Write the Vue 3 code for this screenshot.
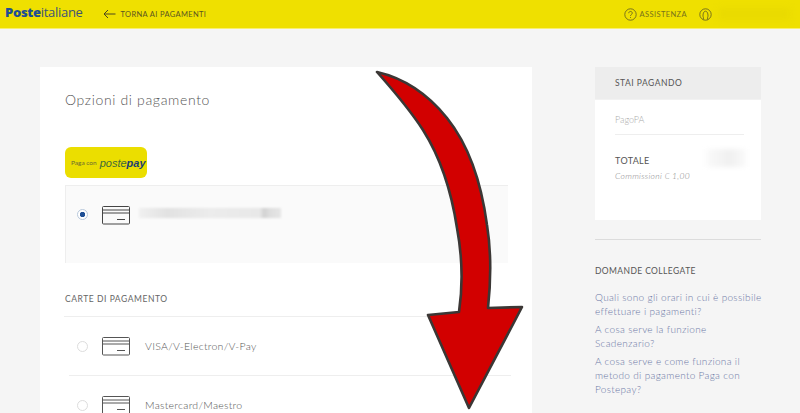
<template>
  <div class="page">
    <header class="topbar">
      <div class="logo"><b>Poste</b>italiane</div>
      <a class="back">
        <svg width="13" height="10" viewBox="0 0 13 10" fill="none" stroke="#4a4620" stroke-width="1">
          <path d="M12.5 5H1M5 1 1 5l4 4" />
        </svg>
        TORNA AI PAGAMENTI
      </a>
      <div class="top-right">
        <svg width="13" height="13" viewBox="0 0 13 13" fill="none" stroke="#6b6620" stroke-width="0.9">
          <circle cx="6.5" cy="6.5" r="5.7" />
          <path d="M4.7 5.2c0-2.3 3.6-2.3 3.6-.1 0 1.4-1.8 1.4-1.8 2.8M6.5 9v.9" />
        </svg>
        <span class="help">ASSISTENZA</span>
        <svg class="user" width="13" height="13" viewBox="0 0 13 13" fill="none" stroke="#6b6620" stroke-width="0.9">
          <circle cx="6.5" cy="6.5" r="5.7" />
          <path d="M4.4 11.5V9.3C3.6 8.5 3.9 3.2 6.5 3.2s2.9 5.3 2.1 6.1v2.2" />
        </svg>
        <span class="blur-name"></span>
      </div>
    </header>

    <main class="content">
      <section class="card">
        <h1>Opzioni di pagamento</h1>
        <button class="postepay">
          <span class="paga">Paga con</span>
          <span class="brand">poste<b>pay</b></span>
        </button>
        <div class="saved">
          <span class="radio checked"></span>
          <svg class="cc" width="28" height="19" viewBox="0 0 28 19" fill="none" stroke="#444" stroke-width="1">
            <rect x="0.5" y="0.5" width="27" height="17.5" rx="1" />
            <path d="M.5 4h27M.5 7h27M15 13.5h8" />
          </svg>
          <span class="blur-card"></span>
        </div>
        <h2>CARTE DI PAGAMENTO</h2>
        <div class="method first">
          <span class="radio"></span>
          <svg class="cc" width="28" height="19" viewBox="0 0 28 19" fill="none" stroke="#555" stroke-width="1">
            <rect x="0.5" y="0.5" width="27" height="17.5" rx="1" />
            <path d="M.5 4h27M.5 7h27M15 13.5h8" />
          </svg>
          <span>VISA/V-Electron/V-Pay</span>
        </div>
        <div class="method">
          <span class="radio"></span>
          <svg class="cc" width="28" height="19" viewBox="0 0 28 19" fill="none" stroke="#555" stroke-width="1">
            <rect x="0.5" y="0.5" width="27" height="17.5" rx="1" />
            <path d="M.5 4h27M.5 7h27M15 13.5h8" />
          </svg>
          <span>Mastercard/Maestro</span>
        </div>
      </section>

      <aside class="side">
        <div class="summary">
          <div class="summary-head">STAI PAGANDO</div>
          <div class="summary-body">
            <div class="payee">PagoPA</div>
            <div class="total">
              <div>
                <div class="total-label">TOTALE</div>
                <div class="fee">Commissioni € 1,00</div>
              </div>
              <span class="blur-total"></span>
            </div>
          </div>
        </div>
        <div class="faq">
          <h3>DOMANDE COLLEGATE</h3>
          <a v-for="q in questions" :key="q">{{ q }}</a>
        </div>
      </aside>
    </main>

    <svg class="arrow" width="800" height="413" viewBox="0 0 800 413">
      <path
        d="M377 72C403 78 427 93 447 118C467 143 481 180 487 225C491 250 491 280 488 308L522 307L469 408L428 315L459 312C463 285 462 255 457 228C452 195 442 160 423 130C410 110 393 90 377 72Z"
        fill="#d20000" stroke="#3b3735" stroke-width="2.6" stroke-linejoin="round"
      />
    </svg>
  </div>
</template>

<script setup>
const questions = [
  "Quali sono gli orari in cui è possibile effettuare i pagamenti?",
  "A cosa serve la funzione Scadenzario?",
  "A cosa serve e come funziona il metodo di pagamento Paga con Postepay?",
];
</script>

<style>
html,
body {
  margin: 0;
  background: #f5f5f5;
}
</style>

<style scoped>
.page {
  position: relative;
  width: 800px;
  height: 413px;
  overflow: hidden;
  background: #f5f5f5;
  font-family: Lato, "Liberation Sans", sans-serif;
  color: #555;
}
.topbar {
  display: flex;
  align-items: center;
  height: 29px;
  padding: 0 5px;
  box-sizing: border-box;
  background: #efe000;
  border-bottom: 1px solid #f8ef70;
}
.logo {
  font-family: "Open Sans", sans-serif;
  font-size: 13px;
  letter-spacing: -0.3px;
  color: #3b5378;
  margin-top: -4px;
}
.logo b {
  font-weight: 800;
  color: #1e4f94;
}
.back {
  display: flex;
  align-items: center;
  gap: 5px;
  margin-left: 20px;
  font-size: 7.5px;
  letter-spacing: 0.35px;
  color: #5a5520;
}
.top-right {
  display: flex;
  align-items: center;
  margin-left: auto;
  margin-right: 5px;
  color: #77721c;
  font-size: 7.5px;
  letter-spacing: 0.4px;
}
.help {
  margin-left: 3px;
}
.user {
  margin-left: 12px;
}
.blur-name {
  width: 72px;
  height: 12px;
  margin-left: 6px;
  background: #e9da00;
  filter: blur(3px);
}
.content {
  display: flex;
  align-items: flex-start;
  padding: 38px 0 0 40px;
}
.card {
  box-sizing: border-box;
  width: 492px;
  height: 360px;
  padding: 24px 24px 0 25px;
  background: #fff;
}
h1 {
  margin: 0;
  font-size: 14px;
  font-weight: 300;
  letter-spacing: 0.65px;
  line-height: 18px;
  color: #555;
}
.postepay {
  display: flex;
  align-items: center;
  gap: 3px;
  width: 82px;
  height: 31px;
  margin-top: 38px;
  padding: 0 0 0 6px;
  border: 0;
  border-radius: 6px;
  background: #ebde00;
  font-family: inherit;
}
.paga {
  font-size: 6.5px;
  color: #6a6a30;
  white-space: nowrap;
}
.brand {
  font-family: "Liberation Sans", sans-serif;
  font-style: italic;
  font-size: 11px;
  color: #3f6a3a;
}
.brand b {
  color: #1d3f73;
}
.saved {
  display: flex;
  align-items: flex-start;
  height: 78px;
  margin-top: 7px;
  padding-top: 20px;
  box-sizing: border-box;
  background: #fafafa;
  border-top: 1px solid #eeeeee;
  border-left: 1px solid #eeeeee;
}
.radio {
  box-sizing: border-box;
  flex: none;
  width: 11px;
  height: 11px;
  margin: 3px 14px 0 11px;
  border: 1px solid #ddd;
  border-radius: 50%;
  background: #fff;
}
.radio.checked {
  border-color: #b9c9dc;
  background: radial-gradient(circle, #1f4f95 0 2.4px, #fff 3px);
}
.cc {
  flex: none;
}
.blur-card {
  width: 142px;
  height: 10px;
  margin: 2px 0 0 9px;
  background: linear-gradient(90deg, #f0f0f0, #e2e2e2 20%, #ececec 50%, #e8e8e8 85%, #d2d2d2 88%, #dedede 92%, #e6e6e6);
  filter: blur(1px);
}
h2 {
  margin: 30px 0 0;
  font-size: 8.5px;
  font-weight: 400;
  letter-spacing: 0.55px;
  line-height: 12px;
  color: #666;
}
.method {
  display: flex;
  align-items: center;
  height: 58px;
  margin-left: 4px;
  margin-right: -3px;
  border-top: 1px solid #eeeeee;
  font-size: 10.5px;
  font-weight: 300;
  letter-spacing: 0.28px;
  color: #555;
}
.method.first {
  margin-top: 11px;
  margin-left: -1px;
  padding-left: 5px;
}
.method .radio {
  margin-top: 0;
  margin-left: 8px;
}
.method .cc + span {
  margin-left: 15px;
}
.side {
  width: 166px;
  margin-left: 63px;
}
.summary {
  background: #fff;
}
.summary-head {
  height: 32px;
  padding-left: 20px;
  line-height: 33px;
  background: #ededed;
  border-bottom: 1px solid #f2f2f2;
  font-size: 8.5px;
  letter-spacing: 0.5px;
  color: #555;
}
.summary-body {
  height: 120px;
  padding: 13px 19px 0 20px;
  box-sizing: border-box;
}
.payee {
  height: 21px;
  font-size: 9px;
  font-weight: 300;
  line-height: 14px;
  color: #aaa;
  border-bottom: 1px solid #eee;
  margin-right: -2px;
}
.total {
  display: flex;
  justify-content: space-between;
  margin-top: 20px;
}
.total-label {
  font-size: 9px;
  letter-spacing: 0.35px;
  line-height: 12px;
  color: #555;
}
.fee {
  margin-top: 4px;
  font-size: 8.5px;
  font-weight: 300;
  font-style: italic;
  letter-spacing: 0.3px;
  color: #888;
}
.blur-total {
  width: 40px;
  height: 18px;
  margin: -6px -4px 0 0;
  background: linear-gradient(90deg, #fafafa, #f0f0f0 60%, #fafafa);
  filter: blur(2px);
}
.faq {
  margin-top: 19px;
  padding-top: 25px;
  border-top: 1px solid #dcdcdc;
}
h3 {
  margin: 0 0 13px;
  font-size: 8.5px;
  font-weight: 400;
  letter-spacing: 0.4px;
  line-height: 12px;
  color: #555;
}
.faq a {
  display: block;
  margin-right: -4px;
  margin-bottom: 4px;
  font-size: 10px;
  font-weight: 300;
  letter-spacing: 0.32px;
  line-height: 14px;
  color: #6c78a6;
}
.arrow {
  position: absolute;
  top: 0;
  left: 0;
  pointer-events: none;
}
</style>
